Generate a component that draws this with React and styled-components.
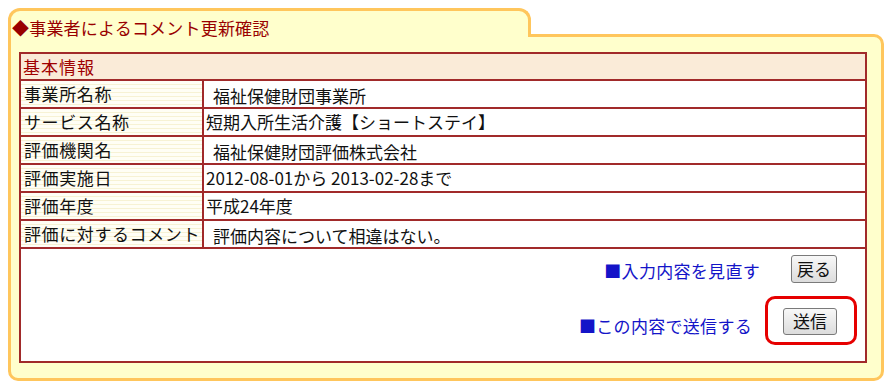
import React from 'react';
import styled, { createGlobalStyle } from 'styled-components';

const GlobalStyle = createGlobalStyle`
  html, body {
    margin: 0;
    padding: 0;
    background: #ffffff;
  }
  body {
    font-family: "Noto Sans CJK JP", "Noto Sans", sans-serif;
  }
`;

const Frame = styled.div`
  display: flex;
  flex-direction: column;
  width: 876px;
  margin: 8px 0 0 8px;
`;

const Tab = styled.div`
  position: relative;
  z-index: 1;
  box-sizing: border-box;
  width: 523px;
  height: 29px;
  margin-bottom: -3px;
  border: 3px solid #ffc65c;
  border-bottom: none;
  border-radius: 12px 12px 0 0;
  background: #ffffcc;
`;

const Title = styled.h1`
  margin: 7px 0 0 1px;
  font-size: 17px;
  font-weight: normal;
  line-height: 20px;
  letter-spacing: 0.2px;
  color: #990000;
  white-space: nowrap;
`;

const Body = styled.div`
  box-sizing: border-box;
  height: 347px;
  border: 3px solid #ffc65c;
  border-radius: 0 10px 10px 10px;
  background: #ffffcc;
  padding: 15px 14px 18px 8px;
`;

const Table = styled.table`
  width: 848px;
  border-collapse: collapse;
  border: 2px solid #a12a2a;
  font-size: 17px;
  line-height: 20px;
  color: #111111;
`;

const HeadCell = styled.th`
  height: 25px;
  padding: 0 0 0 2px;
  text-align: left;
  font-weight: normal;
  color: #a00000;
  background: #faebd8;
  border: 2px solid #a12a2a;
  letter-spacing: 1px;
`;

const LabelCell = styled.td`
  width: 178px;
  height: 26px;
  padding: 0 0 0 3px;
  border: 2px solid #a12a2a;
  white-space: nowrap;
  letter-spacing: 0.6px;
  background: repeating-linear-gradient(
    to bottom,
    #fffef5 0px,
    #fffef5 3px,
    #f7f2d4 3px,
    #f7f2d4 4px
  );
`;

const ValueCell = styled.td`
  height: 26px;
  padding: ${p => (p.$indent ? '3px 0 0 9px' : '0 0 0 2px')};
  box-sizing: border-box;
  border: 2px solid #a12a2a;
  background: #ffffff;
  white-space: nowrap;
`;

const ActionCell = styled.td`
  height: 106px;
  padding: 6px 28px 0 0;
  border: 2px solid #a12a2a;
  background: #ffffff;
  vertical-align: top;
`;

const Actions = styled.div`
  display: flex;
  flex-direction: column;
  align-items: flex-end;
  gap: 23px;
`;

const ActionRow = styled.div`
  display: flex;
  align-items: center;
  gap: 31px;
`;

const Link = styled.a`
  color: #1414c8;
  font-size: 17px;
  letter-spacing: 0.3px;
  text-decoration: none;
  cursor: pointer;
  margin-top: ${p => p.$drop || 0}px;
`;

const Button = styled.button`
  box-sizing: border-box;
  height: ${p => p.$h || 28}px;
  padding: 0 ${p => p.$px || 5}px;
  font-family: inherit;
  font-size: 17px;
  line-height: 20px;
  color: #111111;
  border: 1px solid #7a7a7a;
  border-radius: 3px;
  background: linear-gradient(#f8f8f8, #dcdcdc);
  cursor: pointer;
`;

const Highlight = styled.div`
  display: flex;
  margin: -12px -20px -10px -18px;
  padding: 9px 17px 7px 15px;
  border: 3px solid #e60000;
  border-radius: 10px;
`;

const rows = [
  { label: '事業所名称', value: '福祉保健財団事業所', indent: true },
  { label: 'サービス名称', value: '短期入所生活介護【ショートステイ】' },
  { label: '評価機関名', value: '福祉保健財団評価株式会社', indent: true },
  { label: '評価実施日', value: '2012-08-01から 2013-02-28まで' },
  { label: '評価年度', value: '平成24年度' },
  { label: '評価に対するコメント', value: '評価内容について相違はない。', indent: true },
];

export default function App() {
  return (
    <>
      <GlobalStyle />
      <Frame>
        <Tab>
          <Title>◆事業者によるコメント更新確認</Title>
        </Tab>
        <Body>
          <Table>
            <tbody>
              <tr>
                <HeadCell colSpan={2}>基本情報</HeadCell>
              </tr>
              {rows.map(r => (
                <tr key={r.label}>
                  <LabelCell>{r.label}</LabelCell>
                  <ValueCell $indent={r.indent}>{r.value}</ValueCell>
                </tr>
              ))}
              <tr>
                <ActionCell colSpan={2}>
                  <Actions>
                    <ActionRow>
                      <Link $drop={4}>■入力内容を見直す</Link>
                      <Button $px={5}>戻る</Button>
                    </ActionRow>
                    <ActionRow>
                      <Link $drop={10}>■この内容で送信する</Link>
                      <Highlight>
                        <Button $h={27} $px={9}>送信</Button>
                      </Highlight>
                    </ActionRow>
                  </Actions>
                </ActionCell>
              </tr>
            </tbody>
          </Table>
        </Body>
      </Frame>
    </>
  );
}
